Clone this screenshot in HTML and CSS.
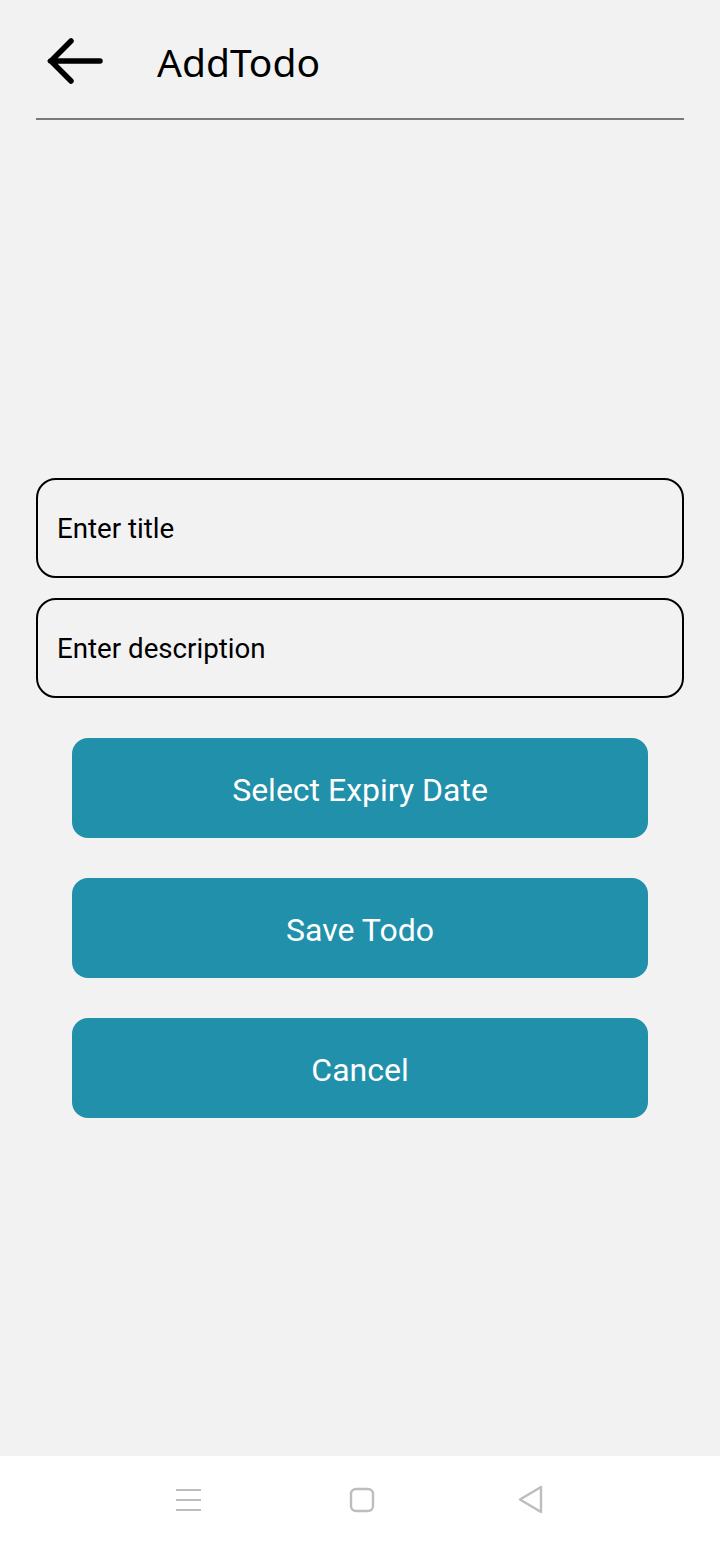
FILE: index.html
```html
<!DOCTYPE html>
<html>
<head>
<meta charset="utf-8">
<link rel="stylesheet" href="styles.css">
</head>
<body>
<div class="screen">
  <header class="appbar">
    <svg class="back" width="58" height="46" viewBox="0 0 58 46">
      <path d="M3.5 23 H53 M24 3 L4 23 L24 43" fill="none" stroke="#000" stroke-width="5.5" stroke-linecap="round" stroke-linejoin="miter"/>
    </svg>
    <h1 class="title">AddTodo</h1>
  </header>
  <div class="divider"></div>
  <main class="form">
    <div class="field">Enter title</div>
    <div class="field">Enter description</div>
    <div class="buttons">
      <button class="btn">Select Expiry Date</button>
      <button class="btn">Save Todo</button>
      <button class="btn">Cancel</button>
    </div>
  </main>
  <nav class="navbar">
    <svg width="28" height="24" viewBox="0 0 28 24"><path d="M1 2H26M1 12H26M1 22H26" stroke="#bdbdbd" stroke-width="2"/></svg>
    <svg width="26" height="26" viewBox="0 0 26 26"><rect x="2" y="2" width="22" height="22" rx="5" fill="none" stroke="#bdbdbd" stroke-width="2.4"/></svg>
    <svg width="28" height="30" viewBox="0 0 28 30"><path d="M24 2 L3 14.5 L24 27 Z" fill="none" stroke="#bdbdbd" stroke-width="2.4" stroke-linejoin="round"/></svg>
  </nav>
</div>
</body>
</html>
```
FILE: styles.css
```css
html, body {
  margin: 0;
  padding: 0;
}
body {
  background: #f2f2f2;
  font-family: Roboto, "Liberation Sans", sans-serif;
}
.screen {
  width: 720px;
  height: 1544px;
  display: flex;
  flex-direction: column;
  background: #f2f2f2;
}
.appbar {
  height: 118px;
  display: flex;
  align-items: center;
  padding-left: 47px;
  box-sizing: border-box;
}
.back {
  display: block;
  margin-top: 4px;
}
.title {
  margin: 4px 0 0 52px;
  font-family: "Noto Sans", "Open Sans", sans-serif;
  font-weight: 400;
  font-size: 39px;
  color: #000;
}
.divider {
  height: 2px;
  margin: 0 36px;
  background: #7a7a7a;
}
.form {
  flex: 1;
  padding: 358px 36px 0;
  display: flex;
  flex-direction: column;
  gap: 20px;
}
.field {
  height: 100px;
  box-sizing: border-box;
  border: 2px solid #000;
  border-radius: 20px;
  padding: 0 19px;
  display: flex;
  align-items: center;
  font-size: 27.7px;
  color: #000;
}
.buttons {
  display: flex;
  flex-direction: column;
  gap: 40px;
  padding: 20px 36px 0;
}
.btn {
  height: 100px;
  border: none;
  border-radius: 16px;
  background: #2190aa;
  color: #fff;
  font-family: Roboto, "Liberation Sans", sans-serif;
  font-size: 32px;
  padding: 3px 0 0;
}
.navbar {
  height: 88px;
  background: #fff;
  display: flex;
  align-items: center;
  justify-content: center;
  gap: 0;
}
.navbar svg {
  display: block;
}
.navbar svg:nth-child(1) { margin-right: 146px; }
.navbar svg:nth-child(2) { margin-right: 142px; }
```
